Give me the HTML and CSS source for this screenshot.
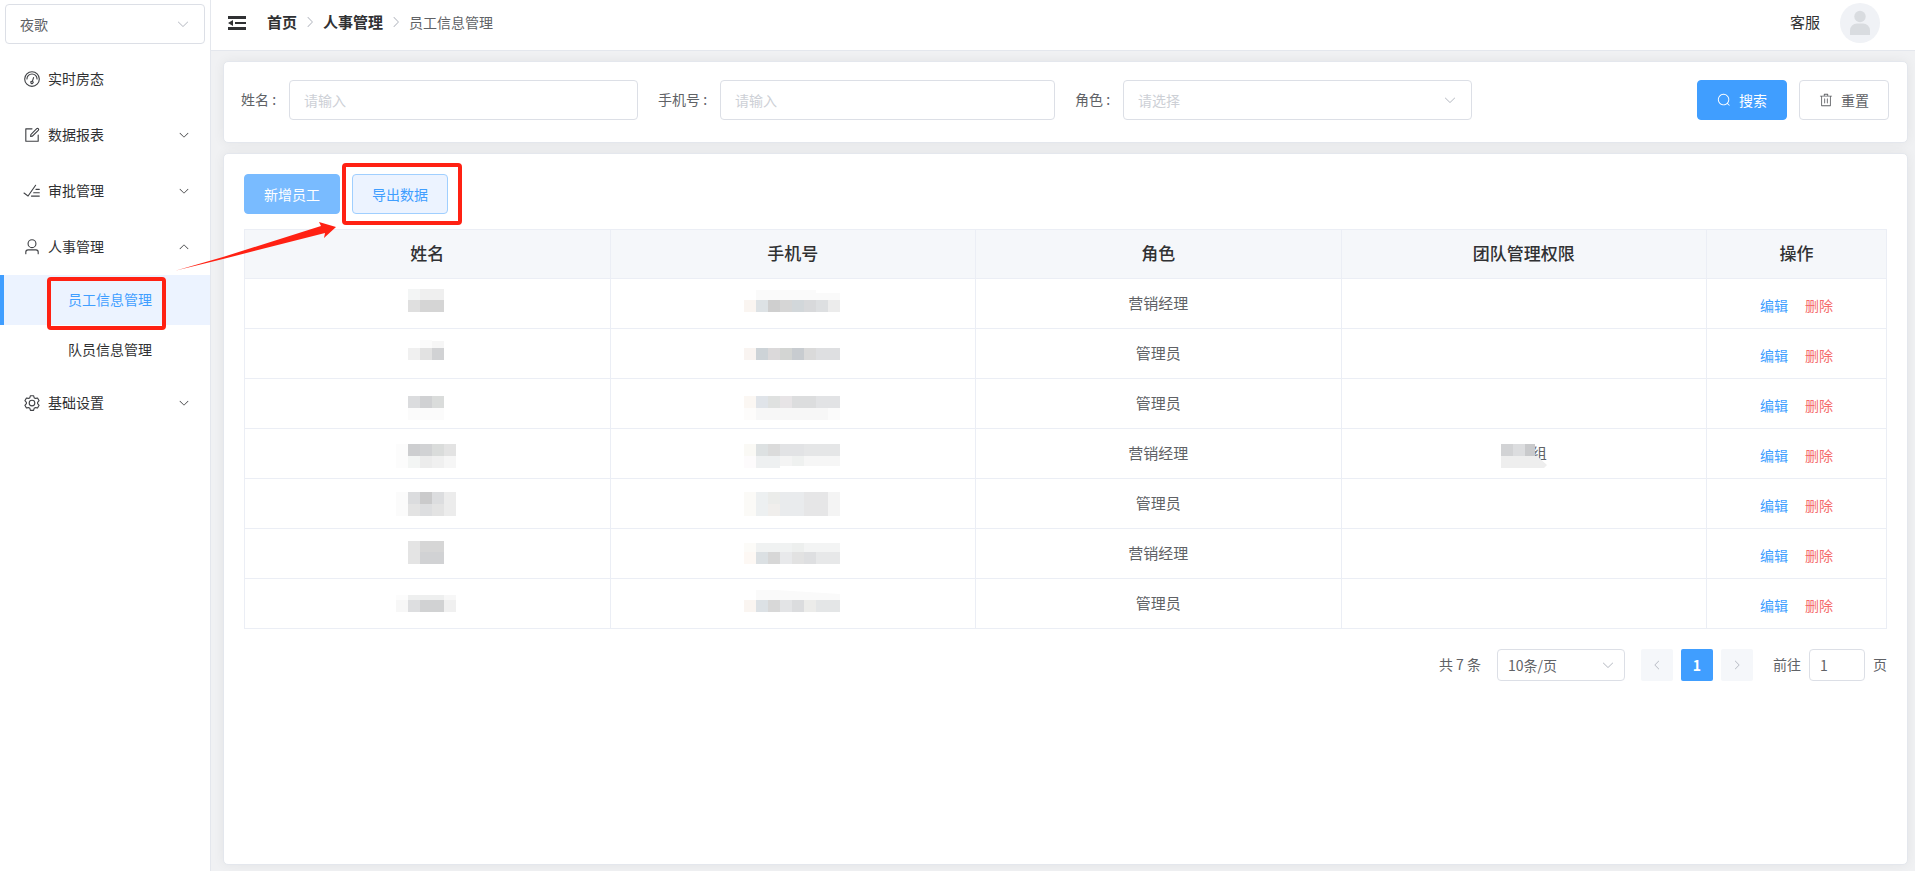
FILE: index.html
```html
<!DOCTYPE html>
<html lang="zh-CN">
<head>
<meta charset="utf-8">
<title>员工信息管理</title>
<link rel="stylesheet" href="styles.css">
</head>
<body>
<svg class="defs" aria-hidden="true">
  <symbol id="down" viewBox="0 0 1024 1024"><path d="M831.872 340.864 512 652.672 192.128 340.864a30.592 30.592 0 0 0-42.752 0 29.12 29.12 0 0 0 0 41.6L489.664 714.24a32 32 0 0 0 44.672 0l340.288-331.712a29.12 29.12 0 0 0 0-41.728 30.592 30.592 0 0 0-42.752 0z"/></symbol>
</svg>
<div class="app">
  <aside class="sidebar">
    <div class="select shop">
      <select aria-label="门店"><option>夜歌</option></select>
      <svg class="caret"><use href="#down"/></svg>
    </div>
    <nav class="menu">
      <a class="item" href="#">
        <svg class="icon" viewBox="0 0 1024 1024"><path d="M512 896a384 384 0 1 0 0-768 384 384 0 0 0 0 768zm0 64a448 448 0 1 1 0-896 448 448 0 0 1 0 896z"/><path d="M192 512a320 320 0 1 1 640 0 32 32 0 1 1-64 0 256 256 0 1 0-512 0 32 32 0 0 1-64 0z"/><path d="M570.432 627.84A96 96 0 1 1 509.568 608l60.992-187.776A32 32 0 1 1 631.424 440l-60.992 187.776zM502.08 734.464a32 32 0 1 0 19.84-60.928 32 32 0 0 0-19.84 60.928z"/></svg>
        <span>实时房态</span>
      </a>
      <a class="item" href="#">
        <svg class="icon" viewBox="0 0 1024 1024"><path d="M832 512a32 32 0 1 1 64 0v352a32 32 0 0 1-32 32H160a32 32 0 0 1-32-32V160a32 32 0 0 1 32-32h352a32 32 0 0 1 0 64H192v640h640V512z"/><path d="m469.952 554.24 52.8-7.552L847.104 222.4a32 32 0 1 0-45.248-45.248L477.44 501.44l-7.552 52.8zm422.4-422.4a96 96 0 0 1 0 135.808l-331.84 331.84a32 32 0 0 1-18.112 9.088L436.8 623.68a32 32 0 0 1-36.224-36.224l15.104-105.6a32 32 0 0 1 9.024-18.112l331.904-331.84a96 96 0 0 1 135.744 0z"/></svg>
        <span>数据报表</span>
        <svg class="fold"><use href="#down"/></svg>
      </a>
      <a class="item" href="#">
        <svg class="icon" viewBox="0 0 1024 1024"><path d="M280.768 753.728 691.456 167.04a32 32 0 1 1 52.416 36.672L314.24 817.472a32 32 0 0 1-45.44 7.296l-230.4-172.8a32 32 0 0 1 38.4-51.2l203.968 152.96zM736 448a32 32 0 1 1 0-64h192a32 32 0 1 1 0 64H736zM608 640a32 32 0 0 1 0-64h319.936a32 32 0 1 1 0 64H608zM480 832a32 32 0 1 1 0-64h447.936a32 32 0 1 1 0 64H480z"/></svg>
        <span>审批管理</span>
        <svg class="fold"><use href="#down"/></svg>
      </a>
      <a class="item" href="#">
        <svg class="icon" viewBox="0 0 1024 1024"><path d="M512 512a192 192 0 1 0 0-384 192 192 0 0 0 0 384zm0 64a256 256 0 1 1 0-512 256 256 0 0 1 0 512zm320 320v-96a96 96 0 0 0-96-96H288a96 96 0 0 0-96 96v96a32 32 0 1 1-64 0v-96a160 160 0 0 1 160-160h448a160 160 0 0 1 160 160v96a32 32 0 1 1-64 0z"/></svg>
        <span>人事管理</span>
        <svg class="fold open"><use href="#down"/></svg>
      </a>
      <a class="subitem active" href="#">员工信息管理<i class="mark mark-menu"></i></a>
      <a class="subitem" href="#">队员信息管理</a>
      <a class="item" href="#">
        <svg class="icon" viewBox="0 0 1024 1024"><path d="M600.704 64a32 32 0 0 1 30.464 22.208l35.2 109.376c14.784 7.232 28.928 15.36 42.432 24.512l112.384-24.192a32 32 0 0 1 34.432 15.36L944.32 364.8a32 32 0 0 1-4.032 37.504l-77.12 85.12a357.12 357.12 0 0 1 0 49.024l77.12 85.248a32 32 0 0 1 4.032 37.504l-88.704 153.6a32 32 0 0 1-34.432 15.296L708.8 803.904c-13.44 9.088-27.648 17.28-42.368 24.512l-35.264 109.376A32 32 0 0 1 600.704 960H423.296a32 32 0 0 1-30.464-22.208L357.696 828.48a351.616 351.616 0 0 1-42.56-24.64l-112.32 24.256a32 32 0 0 1-34.432-15.36L79.68 659.2a32 32 0 0 1 4.032-37.504l77.12-85.248a357.12 357.12 0 0 1 0-48.896l-77.12-85.248A32 32 0 0 1 79.68 364.8l88.704-153.6a32 32 0 0 1 34.432-15.296l112.32 24.256c13.568-9.152 27.776-17.408 42.56-24.64l35.2-109.312A32 32 0 0 1 423.232 64H600.64zm-23.424 64H446.72l-36.352 113.088-24.512 11.968a294.113 294.113 0 0 0-34.816 20.096l-22.656 15.36-116.224-25.088-65.28 113.152 79.68 88.192-1.92 27.136a293.12 293.12 0 0 0 0 40.192l1.92 27.136-79.808 88.192 65.344 113.152 116.224-25.024 22.656 15.296a294.113 294.113 0 0 0 34.816 20.096l24.512 11.968L446.72 896h130.688l36.48-113.152 24.448-11.904a288.282 288.282 0 0 0 34.752-20.096l22.592-15.296 116.288 25.024 65.28-113.152-79.744-88.192 1.92-27.136a293.12 293.12 0 0 0 0-40.256l-1.92-27.136 79.808-88.128-65.344-113.152-116.288 24.96-22.592-15.232a287.616 287.616 0 0 0-34.752-20.096l-24.448-11.904L577.344 128zM512 320a192 192 0 1 1 0 384 192 192 0 0 1 0-384zm0 64a128 128 0 1 0 0 256 128 128 0 0 0 0-256z"/></svg>
        <span>基础设置</span>
        <svg class="fold"><use href="#down"/></svg>
      </a>
    </nav>
  </aside>

  <div class="page">
    <header class="topbar">
      <button class="collapse" type="button" aria-label="收起菜单">
        <svg viewBox="0 0 18 14"><path d="M0 0h18v3H0zM7 6h11v2H7zM0 11h18v3H0zM0 7l5-3v6z"/></svg>
      </button>
      <nav class="crumbs">
        <a href="#">首页</a>
        <svg class="sep"><use href="#down"/></svg>
        <a href="#">人事管理</a>
        <svg class="sep"><use href="#down"/></svg>
        <span>员工信息管理</span>
      </nav>
      <div class="account">
        <span>客服</span>
        <svg class="avatar" viewBox="0 0 40 40"><circle cx="20" cy="20" r="20" fill="#f0f2f6"/><circle cx="20" cy="13.500" r="5.700" fill="#d9dce0"/><path fill="#d9dce0" d="M10 32v-4.500a7 7 0 0 1 7-7h6a7 7 0 0 1 7 7V32z"/></svg>
      </div>
    </header>

    <main class="content">
      <form class="card filters">
        <div class="field"><label for="name">姓名 :</label><input id="name" type="text" placeholder="请输入"></div>
        <div class="field"><label for="phone">手机号 :</label><input id="phone" type="text" placeholder="请输入"></div>
        <div class="field">
          <label for="role">角色 :</label>
          <div class="select empty">
            <select id="role"><option>请选择</option></select>
            <svg class="caret"><use href="#down"/></svg>
          </div>
        </div>
        <div class="actions">
          <button class="btn primary" type="button"><svg viewBox="0 0 1024 1024"><path d="m795.904 750.72 124.992 124.928a32 32 0 0 1-45.248 45.248L750.656 795.904a416 416 0 1 1 45.248-45.248zM480 832a352 352 0 1 0 0-704 352 352 0 0 0 0 704z"/></svg>搜索</button>
          <button class="btn" type="button"><svg viewBox="0 0 1024 1024"><path d="M160 256H96a32 32 0 0 1 0-64h256V95.936a32 32 0 0 1 32-32h256a32 32 0 0 1 32 32V192h256a32 32 0 1 1 0 64h-64v672a32 32 0 0 1-32 32H192a32 32 0 0 1-32-32V256zm448-64v-64H416v64h192zM224 896h576V256H224v640zm192-128a32 32 0 0 1-32-32V416a32 32 0 0 1 64 0v320a32 32 0 0 1-32 32zm192 0a32 32 0 0 1-32-32V416a32 32 0 0 1 64 0v320a32 32 0 0 1-32 32z"/></svg>重置</button>
        </div>
      </form>

      <section class="card list">
        <div class="toolbar">
          <button class="btn add" type="button">新增员工</button>
          <div class="export">
            <button class="btn plain" type="button">导出数据</button>
            <i class="mark mark-export"></i>
            <svg class="arrow" viewBox="0 0 160 50"><path fill="#ff2113" d="M0 49.500 47 36 145 5 143 1 160 6 148 17 149 12 47 38z"/></svg>
          </div>
        </div>

        <table class="grid">
          <colgroup><col><col><col><col><col class="ops-col"></colgroup>
          <thead><tr><th>姓名</th><th>手机号</th><th>角色</th><th>团队管理权限</th><th>操作</th></tr></thead>
          <tbody>
            <tr>
              <td><svg class="mosaic name"><path fill="#f3f5f5" d="M12 10h12v11H12z"/><path fill="#efefef" d="M24 10h24v11H24z"/><path fill="#dfdfdf" d="M12 21h12v12H12z"/><path fill="#d5d5d5" d="M24 21h24v12H24z"/></svg></td>
              <td><svg class="mosaic phone"><path fill="#fafafa" d="M12 11h60v3h24v7H12z"/><path fill="#faf5f1" d="M0 21h12v12H0z"/><path fill="#dde2e5" d="M12 21h12v12H12z"/><path fill="#cfcfcf" d="M24 21h12v12H24z"/><path fill="#d6d6d6" d="M36 21h12v12H36z"/><path fill="#d2d7da" d="M48 21h12v12H48z"/><path fill="#d8d9db" d="M60 21h12v12H60z"/><path fill="#dddfe1" d="M72 21h12v12H72z"/><path fill="#ececec" d="M84 21h12v12H84z"/></svg></td>
              <td><span class="role">营销经理</span></td><td></td>
              <td><div class="ops"><button type="button">编辑</button><button class="danger" type="button">删除</button></div></td>
            </tr>
            <tr>
              <td><svg class="mosaic name"><path fill="#fbfbfb" d="M24 11h12v8H24z"/><path fill="#f6f6f6" d="M36 12h12v7H36z"/><path fill="#f0f0f0" d="M12 19h12v12H12z"/><path fill="#e2e2e2" d="M24 19h12v12H24z"/><path fill="#d1d2d4" d="M36 19h12v12H36z"/></svg></td>
              <td><svg class="mosaic phone"><path fill="#f9f4f1" d="M0 19h12v12H0z"/><path fill="#cdd3d7" d="M12 19h12v12H12z"/><path fill="#dbd9da" d="M24 19h12v12H24z"/><path fill="#d3d5d3" d="M36 19h12v12H36z"/><path fill="#c8ccd0" d="M48 19h12v12H48z"/><path fill="#dadada" d="M60 19h12v12H60z"/><path fill="#dedfe1" d="M72 19h24v12H72z"/></svg></td>
              <td><span class="role">管理员</span></td><td></td>
              <td><div class="ops"><button type="button">编辑</button><button class="danger" type="button">删除</button></div></td>
            </tr>
            <tr>
              <td><svg class="mosaic name"><path fill="#fbfbfb" d="M12 29h36v12H12z"/><path fill="#dbdcde" d="M12 17h12v12H12z"/><path fill="#d0d1d3" d="M24 17h12v12H24z"/><path fill="#dadcdb" d="M36 17h12v12H36z"/></svg></td>
              <td><svg class="mosaic phone"><path fill="#fdfcfb" d="M0 29h12v12H0z"/><path fill="#f7f7f7" d="M12 29h72v12H12z"/><path fill="#fbfbfb" d="M84 29h12v12H84z"/><path fill="#fbf7f3" d="M0 17h12v12H0z"/><path fill="#e0e4e9" d="M12 17h12v12H12z"/><path fill="#dfe1e0" d="M24 17h12v12H24z"/><path fill="#e7e4e6" d="M36 17h12v12H36z"/><path fill="#dcddde" d="M48 17h24v12H48z"/><path fill="#e2e3e5" d="M72 17h24v12H72z"/></svg></td>
              <td><span class="role">管理员</span></td><td></td>
              <td><div class="ops"><button type="button">编辑</button><button class="danger" type="button">删除</button></div></td>
            </tr>
            <tr>
              <td><svg class="mosaic name"><path fill="#fcfcfc" d="M0 15h12v24H0z"/><path fill="#cdced0" d="M12 15h12v12H12z"/><path fill="#d1d2d4" d="M24 15h12v12H24z"/><path fill="#dadcdb" d="M36 15h12v12H36z"/><path fill="#e3e3e3" d="M48 15h12v12H48z"/><path fill="#f3f5f4" d="M12 27h12v12H12z"/><path fill="#ececec" d="M24 27h12v12H24z"/><path fill="#f0f0f0" d="M36 27h12v12H36z"/><path fill="#f6f6f6" d="M48 27h12v12H48z"/></svg></td>
              <td><svg class="mosaic phone"><path fill="#faf9f5" d="M0 15h12v12H0z"/><path fill="#dde1e2" d="M12 15h12v12H12z"/><path fill="#dbdbdb" d="M24 15h12v12H24z"/><path fill="#e2e3e5" d="M36 15h24v12H36z"/><path fill="#e5e6e7" d="M60 15h36v12H60z"/><path fill="#fdfbfc" d="M0 27h12v12H0z"/><path fill="#eef0f1" d="M12 27h24v12H12z"/><path fill="#f4f4f4" d="M36 27h12v10H36z"/><path fill="#eff1f0" d="M48 27h12v10H48z"/><path fill="#f6f6f6" d="M60 27h36v10H60z"/></svg></td>
              <td><span class="role">营销经理</span></td>
              <td><div class="team"><svg class="mosaic group"><path fill="#d2d3d5" d="M0 15h12v12H0z"/><path fill="#dcdddf" d="M12 15h12v12H12z"/><path fill="#c9cacc" d="M24 15h10v12H24z"/><path fill="#eeeeee" d="M0 27h36l10 9-3 3H0z"/></svg><span class="role">组</span></div></td>
              <td><div class="ops"><button type="button">编辑</button><button class="danger" type="button">删除</button></div></td>
            </tr>
            <tr>
              <td><svg class="mosaic name"><path fill="#fbfbfb" d="M0 13h12v24H0z"/><path fill="#dbdcde" d="M12 13h12v12H12z"/><path fill="#cacacb" d="M24 13h12v12H24z"/><path fill="#dcdddf" d="M36 13h12v12H36z"/><path fill="#ececec" d="M48 13h12v24H48z"/><path fill="#e3e3e3" d="M12 25h12v12H12zM36 25h12v12H36z"/><path fill="#dddee0" d="M24 25h12v12H24z"/></svg></td>
              <td><svg class="mosaic phone"><path fill="#fbfaf7" d="M0 13h12v24H0z"/><path fill="#edf0f1" d="M12 13h12v24H12z"/><path fill="#ebecea" d="M24 13h12v12H24z"/><path fill="#f0eeec" d="M24 25h12v12H24z"/><path fill="#e9ebed" d="M36 13h24v24H36z"/><path fill="#e6e6e7" d="M60 13h24v24H60z"/><path fill="#f4f4f4" d="M84 13h12v24H84z"/></svg></td>
              <td><span class="role">管理员</span></td><td></td>
              <td><div class="ops"><button type="button">编辑</button><button class="danger" type="button">删除</button></div></td>
            </tr>
            <tr>
              <td><svg class="mosaic name"><path fill="#e4e4e4" d="M12 12h12v23H12z"/><path fill="#d6d6d6" d="M24 12h24v11H24z"/><path fill="#d1d2d4" d="M24 23h24v12H24z"/></svg></td>
              <td><svg class="mosaic phone"><path fill="#fcfbf8" d="M0 14h12v9H0z"/><path fill="#f0f2f2" d="M12 14h36v9H12z"/><path fill="#edefee" d="M48 14h12v9H48z"/><path fill="#f3f4f4" d="M60 14h36v9H60z"/><path fill="#fdf8f4" d="M0 23h12v12H0z"/><path fill="#dbe0e3" d="M12 23h12v12H12z"/><path fill="#d7d7d7" d="M24 23h12v12H24z"/><path fill="#e8e9eb" d="M36 23h12v12H36z"/><path fill="#e2e2e2" d="M48 23h12v12H48z"/><path fill="#dedfe1" d="M60 23h12v12H60z"/><path fill="#e7e8e9" d="M72 23h24v12H72z"/></svg></td>
              <td><span class="role">营销经理</span></td><td></td>
              <td><div class="ops"><button type="button">编辑</button><button class="danger" type="button">删除</button></div></td>
            </tr>
            <tr>
              <td><svg class="mosaic name"><path fill="#fcfcfc" d="M0 16h12v5H0z"/><path fill="#eeefef" d="M12 16h36v5H12z"/><path fill="#f7f7f7" d="M48 16h12v5H48zM0 21h12v12H0z"/><path fill="#dddee0" d="M12 21h12v12H12z"/><path fill="#d1d2d3" d="M24 21h24v12H24z"/><path fill="#f0f0f0" d="M48 21h12v12H48z"/></svg></td>
              <td><svg class="mosaic phone"><path fill="#fafafa" d="M12 11h20l64 4v6H12z"/><path fill="#faf5f1" d="M0 21h12v12H0z"/><path fill="#dce1e5" d="M12 21h12v12H12z"/><path fill="#d8d8d8" d="M24 21h12v12H24z"/><path fill="#e3e4e6" d="M36 21h12v12H36z"/><path fill="#dbdcde" d="M48 21h12v12H48z"/><path fill="#ececea" d="M60 21h12v12H60z"/><path fill="#e4e6e7" d="M72 21h24v12H72z"/></svg></td>
              <td><span class="role">管理员</span></td><td></td>
              <td><div class="ops"><button type="button">编辑</button><button class="danger" type="button">删除</button></div></td>
            </tr>
          </tbody>
        </table>

        <div class="pager">
          <span class="total">共 7 条</span>
          <div class="select size">
            <select aria-label="每页条数"><option>10条/页</option></select>
            <svg class="caret"><use href="#down"/></svg>
          </div>
          <div class="pages">
            <button type="button" disabled aria-label="上一页"><svg class="prev"><use href="#down"/></svg></button>
            <button class="current" type="button">1</button>
            <button type="button" disabled aria-label="下一页"><svg class="next"><use href="#down"/></svg></button>
          </div>
          <div class="jump"><label for="jump">前往</label><input id="jump" type="text" value="1"><span>页</span></div>
        </div>
      </section>
    </main>
  </div>
</div>
</body>
</html>
```
FILE: styles.css
```css
* { box-sizing: border-box; }

body {
  margin: 0;
  font: 14px/20px "Noto Sans CJK SC", sans-serif;
  color: #606266;
  background: #fff;
}

a { color: inherit; text-decoration: none; }
svg { display: block; flex: none; fill: currentColor; }
button, input, select { font: inherit; color: inherit; margin: 0; }
button { cursor: pointer; }

.defs { position: absolute; width: 0; height: 0; }

.app { display: flex; min-height: 100vh; }

/* form controls */
.select { position: relative; }
.select select,
.field input,
.jump input {
  display: block;
  width: 100%;
  height: 40px;
  padding: 0 14px;
  border: 1px solid #dcdfe6;
  border-radius: 4px;
  background: #fff;
  appearance: none;
  outline: none;
}
.select .caret {
  position: absolute;
  right: 15px;
  top: 50%;
  width: 14px;
  height: 14px;
  margin-top: -7px;
  color: #b8bcc4;
  pointer-events: none;
}
.select.empty select { color: #cdd0d6; }
input::placeholder { color: #cdd0d6; opacity: 1; }

/* sidebar */
.sidebar {
  flex: none;
  width: 211px;
  border-right: 1px solid #e4e7ed;
  color: #303133;
}
.shop { margin: 4px 5px 7px; color: #606266; }
.item {
  display: flex;
  align-items: center;
  height: 56px;
  padding: 0 20px 0 23px;
}
.item span { padding-bottom: 2px; }
.item .icon { width: 18px; height: 18px; margin-right: 7px; color: #404246; }
.item .fold { width: 12px; height: 12px; margin-left: auto; }
.item .fold.open { transform: rotate(180deg); }
.subitem {
  position: relative;
  display: flex;
  align-items: center;
  height: 50px;
  padding: 0 0 2px 68px;
}
.subitem.active {
  padding-left: 64px;
  border-left: 4px solid #409eff;
  background: #ecf3ff;
  color: #409eff;
}

/* highlight frames drawn over the interface */
.mark {
  position: absolute;
  border: 4px solid #ff2113;
  border-radius: 4px;
  pointer-events: none;
}
.mark-menu { left: 43px; top: 2px; width: 119px; height: 53px; z-index: 1; }
.mark-export { left: -10px; top: -11px; width: 120px; height: 62px; }
.arrow {
  position: absolute;
  left: -176px;
  top: 47px;
  width: 160px;
  height: 50px;
  pointer-events: none;
}

/* header */
.page { flex: 1; min-width: 0; display: flex; flex-direction: column; }
.topbar {
  display: flex;
  align-items: center;
  height: 51px;
  padding: 0 35px 4px 17px;
  border-bottom: 1px solid #e4e7ed;
}
.collapse { padding: 0; border: 0; background: none; color: #303133; }
.collapse svg { width: 18px; height: 14px; }
.crumbs { display: flex; align-items: center; margin-left: 21px; padding-bottom: 2px; }
.crumbs a { font-size: 15px; font-weight: 700; color: #303133; }
.crumbs .sep { width: 14px; height: 14px; margin: 0 6px; color: #b8bcc4; transform: rotate(-90deg); }
.account {
  display: flex;
  align-items: center;
  gap: 20px;
  margin-left: auto;
  font-size: 15px;
  color: #303133;
}
.account span { padding-bottom: 2px; }
.avatar { width: 40px; height: 40px; }

/* content */
.content {
  flex: 1;
  display: flex;
  flex-direction: column;
  gap: 10px;
  padding: 10px 7px 6px 12px;
  background: #f0f1f3;
}
.card {
  border: 1px solid #e4e7ed;
  border-radius: 5px;
  background: #fff;
  box-shadow: 0 0 12px rgba(0, 0, 0, 0.06);
}
.filters {
  display: grid;
  grid-template-columns: repeat(4, 1fr);
  gap: 20px;
  padding: 18px 18px 22px 17px;
}
.field { display: flex; align-items: center; }
.field label { padding: 0 13px 2px 0; white-space: nowrap; }
.field input, .field .select { flex: 1; min-width: 0; }
.actions { display: flex; justify-content: flex-end; gap: 12px; }

.btn {
  display: inline-flex;
  align-items: center;
  height: 40px;
  padding: 0 19px;
  border: 1px solid #dcdfe6;
  border-radius: 4px;
  background: #fff;
  white-space: nowrap;
}
.btn svg { width: 14px; height: 14px; margin-right: 8px; }
.btn.primary { border-color: #409eff; background: #409eff; color: #fff; }
.btn.add { border-color: #79bbff; background: #79bbff; color: #fff; }
.btn.plain { border-color: #a0cfff; background: #ecf3ff; color: #409eff; }

.list { flex: 1; padding: 20px; }
.toolbar { display: flex; gap: 12px; margin-bottom: 15px; }
.export { position: relative; }

/* table */
.grid {
  width: 100%;
  table-layout: fixed;
  border-collapse: collapse;
  font-size: 15px;
  text-align: center;
}
.ops-col { width: 180px; }
.grid th, .grid td { height: 50px; padding: 0; border: 1px solid #ebeef5; }
.grid th {
  height: 49px;
  padding-bottom: 2px;
  background: #f5f7fa;
  font-size: 17px;
  font-weight: 500;
  color: #303133;
}
.role { display: block; padding-bottom: 2px; }
.mosaic { height: 49px; margin: 0 auto; }
.mosaic.name { width: 62px; }
.mosaic.phone { width: 98px; }
.mosaic.group { position: absolute; left: 0; top: 0; width: 46px; }
.team {
  position: relative;
  display: flex;
  align-items: center;
  justify-content: flex-end;
  width: 46px;
  height: 49px;
  margin: 0 auto;
}
.ops { display: flex; justify-content: center; gap: 17px; padding-top: 2px; font-size: 14px; }
.ops button { padding: 0; border: 0; background: none; color: #409eff; }
.ops .danger { color: #f56c6c; }

/* pagination */
.pager {
  display: flex;
  align-items: center;
  justify-content: flex-end;
  gap: 16px;
  margin-top: 20px;
}
.total { padding-bottom: 2px; }
.size { width: 128px; }
.size select, .jump input { height: 32px; padding: 0 10px; }
.size .caret { right: 10px; }
.pages { display: flex; gap: 8px; }
.pages button {
  display: flex;
  align-items: center;
  justify-content: center;
  width: 32px;
  height: 32px;
  padding: 0;
  border: 0;
  border-radius: 2px;
  background: #f5f7fa;
  color: #b4b8c0;
}
.pages .current { background: #409eff; color: #fff; font-weight: 700; }
.pages svg { width: 12px; height: 12px; }
.prev { transform: rotate(90deg); }
.next { transform: rotate(-90deg); }
.jump { display: flex; align-items: center; gap: 8px; margin-left: 4px; }
.jump label, .jump span { padding-bottom: 2px; }
.jump input { width: 56px; }
```
